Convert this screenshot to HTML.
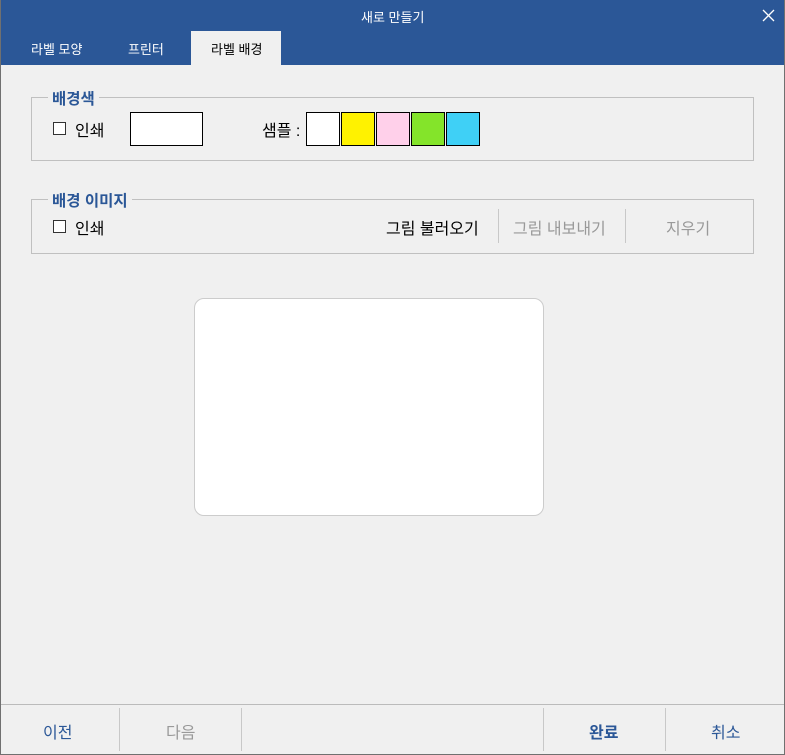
<!DOCTYPE html>
<html><head><meta charset="utf-8"><style>
*{margin:0;padding:0;box-sizing:border-box}
body{width:785px;height:755px;background:#f0f0f0;font-family:"Liberation Sans","Noto Sans CJK KR",sans-serif;position:relative;overflow:hidden;font-size:16px;color:#000}
.frame{position:absolute;left:0;top:0;width:785px;height:755px;border:1px solid #707070;border-top:none}
.title{position:absolute;left:0;top:0;width:785px;height:65px;background:#2b5797}
.t{position:absolute;color:#fff;font-size:13px}
.tab{position:absolute;top:31px;left:191px;width:90px;height:34px;background:#f0f0f0}
.a{position:absolute;white-space:nowrap}
.grp{position:absolute;border:1px solid #c0c0c0}
.leg{position:absolute;background:#f0f0f0;color:#2b5797;font-weight:bold;padding:0 4px;font-size:15.5px}
.sw{position:absolute;top:112px;width:34px;height:34px;border:1px solid #000}
.cb{position:absolute;width:13px;height:13px;border:1px solid #333;background:#fff}
.v{position:absolute;width:1px;background:#c8c8c8}
</style></head><body>
<div class="title"></div>
<div class="t" style="left:361px;top:7px">새로 만들기</div>
<svg style="position:absolute;left:762px;top:9px" width="13" height="13"><path d="M1 1L12 12M12 1L1 12" stroke="#fff" stroke-width="1.3"/></svg>
<div class="t" style="left:31px;top:39px">라벨 모양</div>
<div class="t" style="left:128px;top:39px">프린터</div>
<div class="tab"></div>
<div class="a" style="left:211px;top:39px;font-size:13px;color:#000">라벨 배경</div>

<div class="grp" style="left:31px;top:97px;width:723px;height:64px"></div>
<div class="leg" style="left:48px;top:87px">배경색</div>
<div class="cb" style="left:53px;top:122px"></div>
<div class="a" style="left:75px;top:117px">인쇄</div>
<div class="a" style="left:130px;top:112px;width:73px;height:34px;border:1px solid #000;background:#fff"></div>
<div class="a" style="left:262px;top:117px">샘플 :</div>
<div class="sw" style="left:306px;background:#fff"></div>
<div class="sw" style="left:341px;background:#fff200"></div>
<div class="sw" style="left:376px;background:#ffd0ea"></div>
<div class="sw" style="left:411px;background:#84e42a"></div>
<div class="sw" style="left:446px;background:#3fd0f6"></div>

<div class="grp" style="left:31px;top:199px;width:723px;height:55px"></div>
<div class="leg" style="left:48px;top:189px">배경 이미지</div>
<div class="cb" style="left:53px;top:220px"></div>
<div class="a" style="left:75px;top:215px">인쇄</div>
<div class="a" style="left:386px;top:215px">그림 불러오기</div>
<div class="v" style="left:498px;top:209px;height:34px"></div>
<div class="a" style="left:513px;top:215px;color:#999">그림 내보내기</div>
<div class="v" style="left:625px;top:209px;height:34px"></div>
<div class="a" style="left:666px;top:215px;color:#999">지우기</div>

<div class="a" style="left:194px;top:298px;width:350px;height:218px;background:#fff;border:1px solid #ccc;border-radius:10px"></div>

<div class="a" style="left:1px;top:704px;width:783px;height:1px;background:#bbb"></div>
<div class="v" style="left:119px;top:708px;height:43px"></div>
<div class="v" style="left:241px;top:708px;height:43px"></div>
<div class="v" style="left:543px;top:708px;height:43px"></div>
<div class="v" style="left:665px;top:708px;height:43px"></div>
<div class="a" style="left:43px;top:719px;color:#2b5797">이전</div>
<div class="a" style="left:166px;top:719px;color:#999">다음</div>
<div class="a" style="left:589px;top:719px;color:#2b5797;font-weight:bold">완료</div>
<div class="a" style="left:711px;top:719px;color:#2b5797">취소</div>
<div class="frame"></div>
</body></html>
